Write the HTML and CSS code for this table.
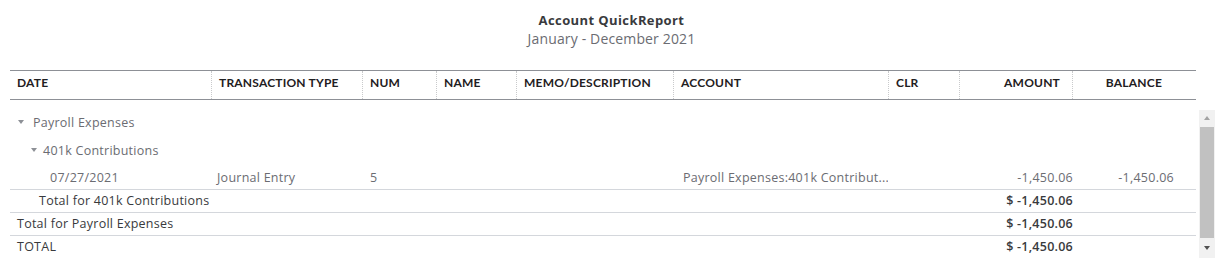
FILE: index.html
```html
<!DOCTYPE html>
<html lang="en">
<head>
<meta charset="utf-8">
<title>Account QuickReport</title>
<link rel="stylesheet" href="styles.css">
</head>
<body>
<div class="report">
  <header class="report-head">
    <div class="report-title">Account QuickReport</div>
    <div class="report-sub">January - December 2021</div>
  </header>

  <div class="thead grid">
    <div class="th">DATE</div>
    <div class="th sep">TRANSACTION TYPE</div>
    <div class="th sep">NUM</div>
    <div class="th sep">NAME</div>
    <div class="th sep">MEMO/DESCRIPTION</div>
    <div class="th sep">ACCOUNT</div>
    <div class="th sep">CLR</div>
    <div class="th sep th-amount">AMOUNT</div>
    <div class="th sep th-balance">BALANCE</div>
  </div>

  <div class="body-wrap">
    <div class="tbody">
      <div class="group-row lvl1"><span class="caret"></span><span>Payroll Expenses</span></div>
      <div class="group-row lvl2"><span class="caret"></span><span>401k Contributions</span></div>
      <div class="data-row grid">
        <div class="td td-date">07/27/2021</div>
        <div class="td td-type">Journal Entry</div>
        <div class="td td-num">5</div>
        <div class="td"></div>
        <div class="td"></div>
        <div class="td td-account">Payroll Expenses:401k Contribut...</div>
        <div class="td"></div>
        <div class="td td-amount">-1,450.06</div>
        <div class="td td-balance">-1,450.06</div>
      </div>
      <div class="total-row grid">
        <div class="tt tt-label lvl2-label">Total for 401k Contributions</div>
        <div class="tt tt-amount">$ -1,450.06</div>
      </div>
      <div class="total-row grid">
        <div class="tt tt-label">Total for Payroll Expenses</div>
        <div class="tt tt-amount">$ -1,450.06</div>
      </div>
      <div class="total-row grid last">
        <div class="tt tt-label">TOTAL</div>
        <div class="tt tt-amount">$ -1,450.06</div>
      </div>
    </div>
    <div class="scrollbar">
      <span class="sb-arrow sb-up"></span>
      <span class="sb-thumb"></span>
      <span class="sb-arrow sb-down"></span>
    </div>
  </div>
</div>
</body>
</html>
```
FILE: styles.css
```css
* { box-sizing: border-box; }

body {
  margin: 0;
  background: #ffffff;
  font-family: "Open Sans", Lato, "Liberation Sans", sans-serif;
  color: #393a3d;
}

.report {
  padding: 10px 0 0 10px;
}

.report-head {
  width: 1203px;
  text-align: center;
  margin-bottom: 22px;
}

.report-title {
  font-size: 13px;
  font-weight: 700;
  letter-spacing: 0.4px;
  line-height: 20px;
  color: #393a3d;
}

.report-sub {
  font-size: 14px;
  letter-spacing: 0.15px;
  line-height: 18px;
  color: #6b6c72;
}

.grid {
  display: grid;
  grid-template-columns: 201px 151px 74px 80px 157px 215px 71px 113px 124px;
  width: 1186px;
}

.thead {
  height: 30px;
  border-top: 1px solid #8d9096;
  border-bottom: 1px solid #8d9096;
}

.th {
  font-family: Lato, "Open Sans", sans-serif;
  font-size: 12px;
  font-weight: 700;
  letter-spacing: 0.2px;
  color: #1f2022;
  line-height: 24px;
  padding-left: 7px;
  white-space: nowrap;
}

.th.sep {
  border-left: 1px dotted #c9cacc;
}

.th-amount {
  text-align: right;
  padding-right: 12px;
}

.th-balance {
  text-align: right;
  padding-right: 34px;
}

.body-wrap {
  display: flex;
  margin-top: 8px;
}

.tbody {
  width: 1186px;
  font-size: 12.5px;
  letter-spacing: 0.25px;
  color: #6b6c72;
}

.group-row {
  display: flex;
  align-items: center;
  height: 28px;
}

.group-row.lvl1 { padding-left: 8px; }
.group-row.lvl2 { padding-left: 21px; }

.caret {
  width: 0;
  height: 0;
  border-left: 3.5px solid transparent;
  border-right: 3.5px solid transparent;
  border-top: 4px solid #8d9096;
  margin-right: 9px;
}

.group-row.lvl2 .caret { margin-right: 6px; }

.data-row {
  height: 26px;
  padding-top: 4px;
  border-bottom: 1px solid #d4d7dc;
}

.td {
  line-height: 20px;
  white-space: nowrap;
  overflow: hidden;
}

.td-date { padding-left: 40px; }
.td-type { padding-left: 6px; }
.td-num { padding-left: 8px; }
.td-account { padding-left: 10px; }
.td-amount { text-align: right; padding-right: 0; margin-right: -1px; }
.td-balance { text-align: right; padding-right: 22px; }

.total-row {
  height: 23px;
  border-bottom: 1px solid #d4d7dc;
  color: #393a3d;
}

.total-row.last {
  height: 22px;
  border-bottom: none;
}

.tt {
  line-height: 22px;
  white-space: nowrap;
}

.tt-label {
  grid-column: 1 / 4;
  padding-left: 7px;
}

.tt-label.lvl2-label {
  padding-left: 29px;
}

.tt-amount {
  grid-column: 8 / 9;
  text-align: right;
  margin-right: -1px;
  font-weight: 600;
}

.scrollbar {
  width: 16px;
  height: 148px;
  margin-top: 2px;
  margin-left: 3px;
  background: #f1f1f1;
  display: flex;
  flex-direction: column;
  align-items: center;
}

.sb-arrow {
  width: 0;
  height: 0;
  border-left: 3.5px solid transparent;
  border-right: 3.5px solid transparent;
}

.sb-up {
  border-bottom: 4px solid #a3a3a3;
  margin-top: 6px;
  margin-bottom: 7px;
}

.sb-thumb {
  width: 14px;
  height: 111px;
  background: #c1c1c1;
}

.sb-down {
  border-top: 4px solid #505050;
  margin-top: 8px;
}
```
